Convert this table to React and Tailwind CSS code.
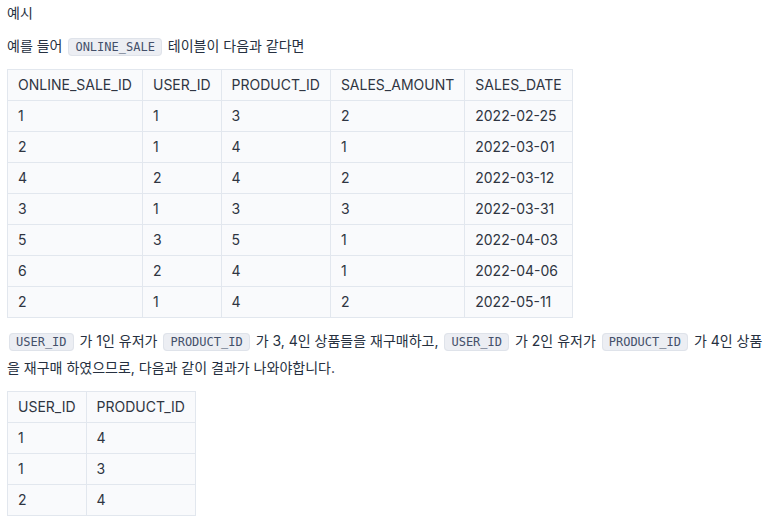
import React from 'react';

const saleRows = [
    ['1', '1', '3', '2', '2022-02-25'],
    ['2', '1', '4', '1', '2022-03-01'],
    ['4', '2', '4', '2', '2022-03-12'],
    ['3', '1', '3', '3', '2022-03-31'],
    ['5', '3', '5', '1', '2022-04-03'],
    ['6', '2', '4', '1', '2022-04-06'],
    ['2', '1', '4', '2', '2022-05-11'],
];

const resultRows = [
    ['1', '4'],
    ['1', '3'],
    ['2', '4'],
];

const Code = ({ children }) => (
    <code className="mx-[2px] rounded-[4px] border border-[#dfe3ea] bg-[#eceef3] px-[6px] py-[1px] font-['DejaVu_Sans_Mono',monospace] text-[12px] text-[#44506a]">
        {children}
    </code>
);

const Table = ({ head, rows }) => (
    <table className="border-collapse bg-[#f9fafc] text-[14px] text-[#2f3542]">
        <thead>
            <tr>
                {head.map(h => (
                    <th key={h} className="h-[31px] border border-[#e2e7ee] px-[10px] text-left font-normal">
                        {h}
                    </th>
                ))}
            </tr>
        </thead>
        <tbody>
            {rows.map((row, i) => (
                <tr key={i}>
                    {row.map((cell, j) => (
                        <td key={j} className="h-[31px] border border-[#e2e7ee] px-[10px]">
                            {cell}
                        </td>
                    ))}
                </tr>
            ))}
        </tbody>
    </table>
);

export default function App() {
    return (
        <div className="min-h-screen bg-white px-[7px] pt-0 font-['Inter','Noto_Sans_CJK_KR',sans-serif] text-[14px] leading-[26px] text-[#263040]">
            <p>예시</p>
            <p className="mt-[7px]">
                예를 들어 <Code>ONLINE_SALE</Code> 테이블이 다음과 같다면
            </p>
            <div className="mt-[9px]">
                <Table
                    head={['ONLINE_SALE_ID', 'USER_ID', 'PRODUCT_ID', 'SALES_AMOUNT', 'SALES_DATE']}
                    rows={saleRows}
                />
            </div>
            <p className="mt-[10px]">
                <Code>USER_ID</Code> 가 1인 유저가 <Code>PRODUCT_ID</Code> 가 3, 4인 상품들을 재구매하고, <Code>USER_ID</Code> 가 2인 유저가 <Code>PRODUCT_ID</Code> 가 4인 상품을 재구매 하였으므로, 다음과 같이 결과가 나와야합니다.
            </p>
            <div className="mt-[10px]">
                <Table head={['USER_ID', 'PRODUCT_ID']} rows={resultRows} />
            </div>
        </div>
    );
}
